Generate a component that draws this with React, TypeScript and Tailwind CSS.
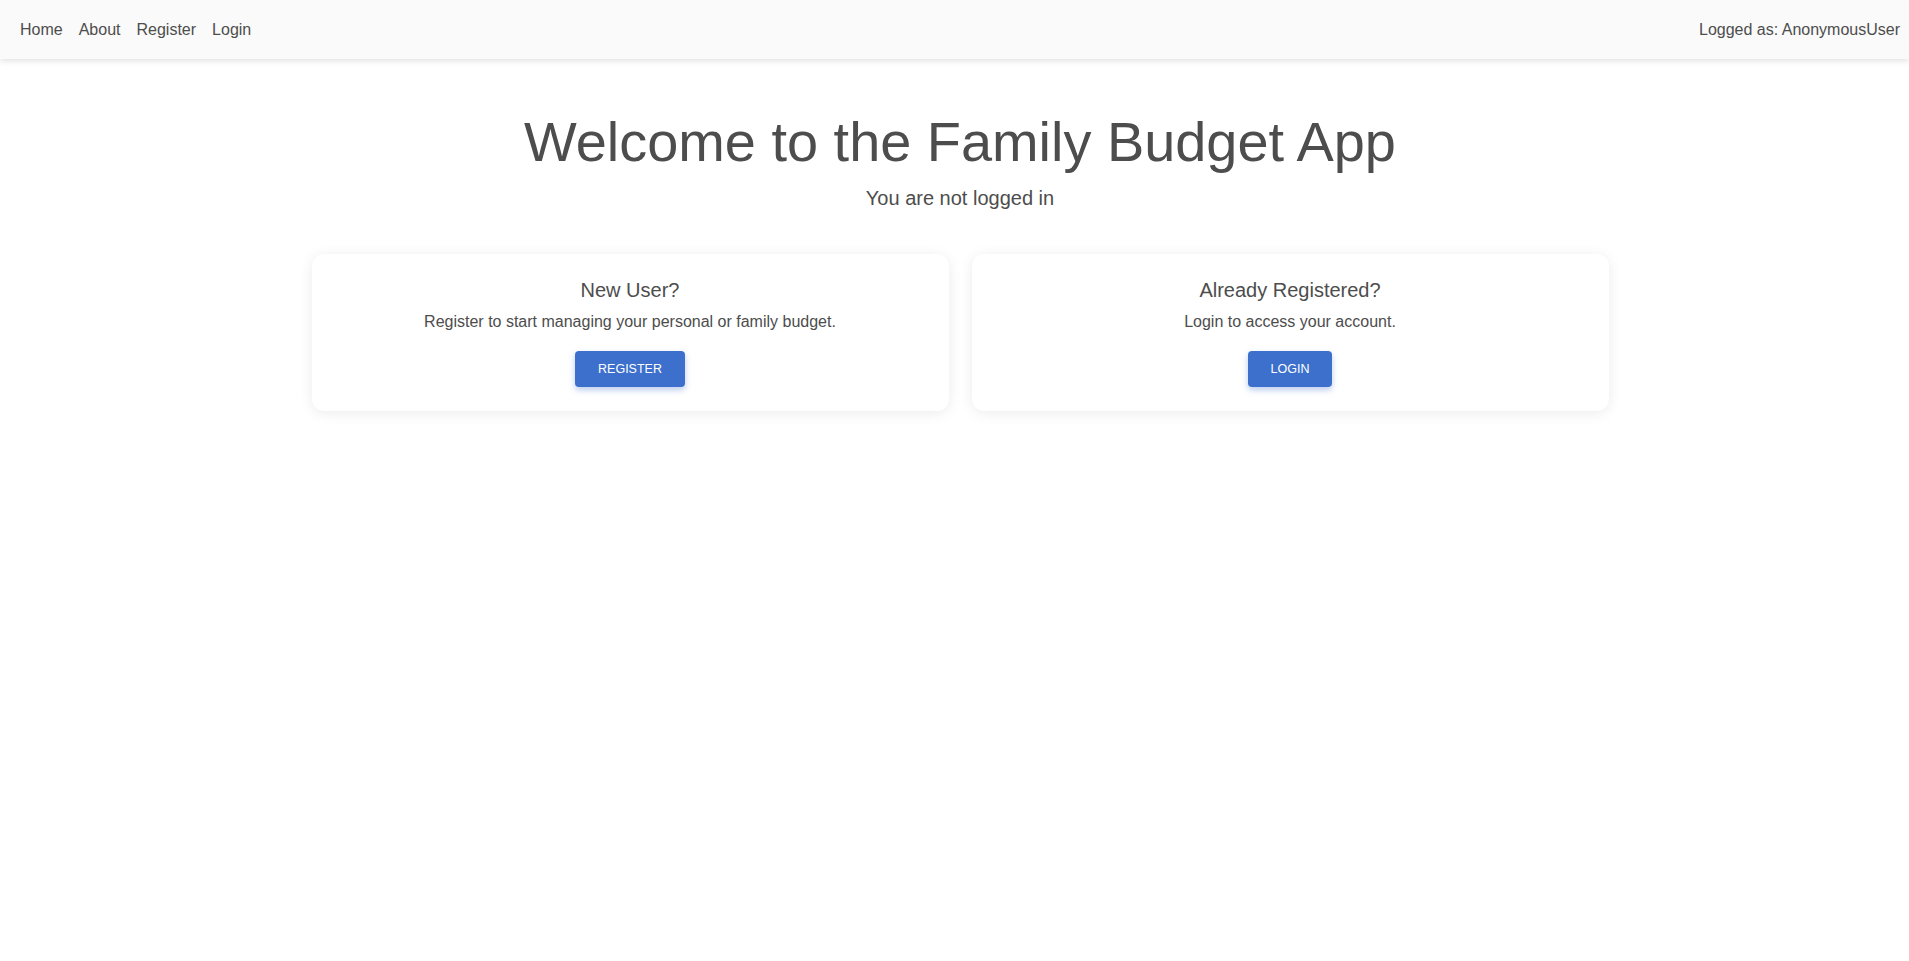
export default function App() {
  return (
    <div className="min-h-screen bg-white text-[#4d4d4d] font-['Liberation_Sans',Arial,sans-serif]">
      {/* top bar */}
      <header className="h-[59px] bg-[#fafafa] shadow-[0_2px_6px_rgba(0,0,0,0.12)] flex items-center justify-between pl-[20px] pr-[9px] text-[16px]">
        <nav className="flex items-center gap-[16px]">
          <a href="#">Home</a>
          <a href="#">About</a>
          <a href="#">Register</a>
          <a href="#">Login</a>
        </nav>
        <span>Logged as: AnonymousUser</span>
      </header>

      <main className="pl-[11px] flex flex-col items-center">
        <h1 className="mt-[49px] text-[55.9px] font-normal leading-[1.2]">
          Welcome to the Family Budget App
        </h1>
        <p className="mt-[8px] text-[20px] leading-[1.5]">You are not logged in</p>

        <div className="mt-[41px] grid grid-cols-2 gap-[23px] w-[1297px]">
          <Card
            title="New User?"
            text="Register to start managing your personal or family budget."
            action="Register"
          />
          <Card
            title="Already Registered?"
            text="Login to access your account."
            action="Login"
          />
        </div>
      </main>
    </div>
  );
}

function Card({ title, text, action }: { title: string; text: string; action: string }) {
  return (
    <div className="bg-white rounded-[12px] shadow-[0_2px_14px_rgba(0,0,0,0.08)] flex flex-col items-center pt-[20px] pb-[24px]">
      <h2 className="text-[20px] leading-[1.6]">{title}</h2>
      <p className="mt-[4px] text-[16px] leading-[1.5]">{text}</p>
      <button className="mt-[17px] h-[36px] px-[23px] rounded-[4px] bg-[#3c70cc] text-white text-[12.5px] font-normal uppercase shadow-[0_3px_6px_rgba(60,112,204,0.35)]">
        {action}
      </button>
    </div>
  );
}
